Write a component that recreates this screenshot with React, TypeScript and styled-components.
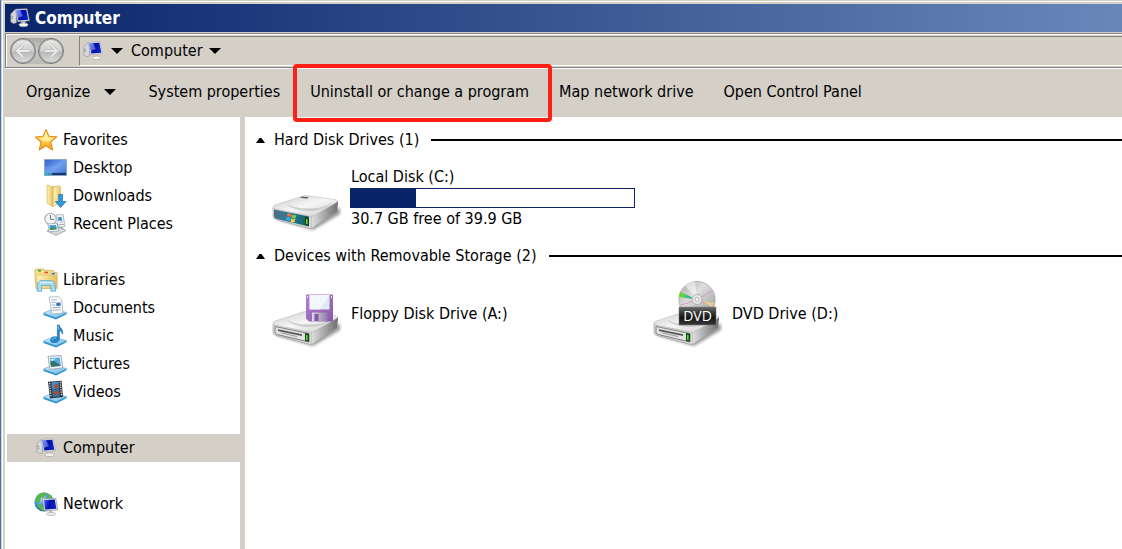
import React from "react";
import styled, { createGlobalStyle, css } from "styled-components";

const face = "#d4d0c8";
const shadow = "#808080";
const navy = "#0a246a";

const GlobalStyle = createGlobalStyle`
  * { box-sizing: border-box; }
  body {
    margin: 0;
    background: ${face};
    color: #000;
    font: 16px/22px "DejaVu Sans Condensed", "DejaVu Sans", Tahoma, sans-serif;
  }
  button { font: inherit; color: inherit; border: 0; padding: 0; background: none; cursor: default; }
  ul { list-style: none; margin: 0; padding: 0; }
  svg { display: block; flex: none; }
`;

const Frame = styled.div`
  min-height: 100vh;
  display: flex;
  border-left: 1px solid #4273b5;
  background: ${face};
`;

const Window = styled.div`
  flex: 1;
  min-width: 0;
  display: flex;
  flex-direction: column;
  margin: 1px 0 0 1px;
  padding: 2px 0 0 2px;
  border-top: 1px solid #fff;
  border-left: 1px solid #fff;
`;

const TitleBar = styled.header`
  display: flex;
  align-items: center;
  gap: 5px;
  height: 28px;
  padding-left: 5px;
  margin-bottom: 1px;
  color: #fff;
  background: linear-gradient(90deg, ${navy}, #6888ba);
`;

const Title = styled.h1`
  margin: 0;
  font-size: 17px;
  line-height: 22px;
  font-weight: bold;
`;

const NavBar = styled.nav`
  display: flex;
  align-items: stretch;
  height: 35px;
  padding: 1px 0 1px 2px;
  border: solid ${shadow};
  border-width: 1px 0 1px 1px;
  box-shadow: inset 1px 1px 0 #fff, inset 0 -1px 0 ${face}, 0 1px 0 #fff;
`;

const History = styled.div`
  display: flex;
  align-items: center;
  align-self: center;
  gap: 2px;
  margin: 0 15px 0 2px;
  border-radius: 13px;
  background: linear-gradient(#aaa9a6, #c9c7c2 40%, #bdbbb6);
`;

const RoundButton = styled.button`
  width: 26px;
  height: 26px;
  border-radius: 50%;
  border: 1px solid #77797b;
  box-shadow: inset 0 0 0 1px #a3a5a6;
  background: linear-gradient(#e9e9e7, #cfcfcd 50%, #b9bab9 55%, #dededc);
  display: grid;
  place-items: center;
`;

const Address = styled.div`
  flex: 1;
  display: flex;
  align-items: center;
  gap: 8px;
  padding-left: 3px;
  margin: 1px 0 0;
  border: solid ${shadow};
  border-width: 1px 0 0 1px;
  border-bottom: 1px solid #fff;
`;

const Crumb = styled.button`
  display: flex;
  align-items: center;
  gap: 6px;
`;

const CommandBar = styled.div`
  display: flex;
  align-items: center;
  gap: 30px;
  height: 48px;
  margin-top: 1px;
  padding: 0 0 2px 21px;
`;

const Command = styled.button<{ $marked?: boolean; $menu?: boolean }>`
  position: relative;
  display: flex;
  align-items: center;
  gap: 14px;
  white-space: nowrap;
  ${(p) => p.$menu && css`margin-right: 2px;`}
  ${(p) =>
    p.$marked &&
    css`
      &::after {
        content: "";
        position: absolute;
        inset: -17px -23px -19px -17px;
        border: 4px solid #ff2015;
        border-radius: 4px;
      }
    `}
`;

const Body = styled.div`
  flex: 1;
  display: flex;
  background: #fff;
`;

const Sidebar = styled.aside`
  flex: none;
  width: 240px;
  padding: 9px 0 9px 2px;
  border-right: 5px solid ${face};
`;

const NavGroup = styled.ul`
  margin-bottom: 28px;
`;

const NavItem = styled.li<{ $child?: boolean; $selected?: boolean }>`
  display: flex;
  align-items: center;
  gap: ${(p) => (p.$child ? 6 : 5)}px;
  height: 28px;
  padding-left: ${(p) => (p.$child ? 36 : 27)}px;
  background: ${(p) => (p.$selected ? face : "none")};
`;

const IconSlot = styled.span`
  flex: none;
  width: 24px;
  display: grid;
  place-items: center;
`;

const NavLink = styled.a`
  color: inherit;
  text-decoration: none;
`;

const Main = styled.main`
  flex: 1;
  min-width: 0;
  padding: 9px 0 0 11px;
`;

const Section = styled.section`
  margin-bottom: 8px;
`;

const SectionHead = styled.h2`
  display: flex;
  align-items: center;
  height: 28px;
  margin: 0 0 8px;
  font-size: 16px;
  line-height: 22px;
  font-weight: normal;
  &::after {
    content: "";
    flex: 1;
    height: 2px;
    margin-left: 12px;
    background: #000;
  }
`;

const Toggle = styled.button`
  display: flex;
  align-items: center;
  gap: 9px;
`;

const Tiles = styled.div`
  display: flex;
  flex-wrap: wrap;
  padding-left: 14px;
`;

const Tile = styled.article`
  display: flex;
  align-items: center;
  gap: 9px;
  width: 381px;
  height: 72px;
`;

const Meter = styled.div`
  width: 285px;
  height: 20px;
  margin-left: -1px;
  border: 1px solid ${navy};
`;

const MeterFill = styled.div`
  height: 100%;
  background: ${navy};
`;

const Down = () => (
  <svg width="12" height="6" viewBox="0 0 12 6"><path d="M0 0h12L6 6z" fill="#000" /></svg>
);

const Up = () => (
  <svg width="9" height="5" viewBox="0 0 9 5"><path d="M0 5h9L5.5 0h-2z" fill="#000" /></svg>
);

const Arrow = ({ back }: { back?: boolean }) => (
  <svg width="16" height="14" viewBox="0 0 16 14">
    <path
      d={back ? "M8 1L2 7l6 6M2 7h12" : "M8 1l6 6-6 6M14 7H2"}
      fill="none" stroke="#b4b4b2" strokeWidth="3.2" strokeLinejoin="round" />
    <path
      d={back ? "M8 1L2 7l6 6M2 7h12" : "M8 1l6 6-6 6M14 7H2"}
      fill="none" stroke="#e9e9e7" strokeWidth="2" />
  </svg>
);

const Defs = () => (
  <svg width="0" height="0" style={{ position: "absolute" }} aria-hidden="true">
    <defs>
      <linearGradient id="screen" x1="0" y1="0" x2="1" y2="0.3">
        <stop offset="0" stopColor="#5c7cf0" /><stop offset=".3" stopColor="#1a35d6" />
        <stop offset=".55" stopColor="#0010a8" /><stop offset="1" stopColor="#0a20c4" />
      </linearGradient>
      <linearGradient id="star" x1="0" y1="0" x2="0" y2="1">
        <stop offset="0" stopColor="#fff3a0" /><stop offset=".6" stopColor="#ffc83c" /><stop offset="1" stopColor="#f79a1c" />
      </linearGradient>
      <linearGradient id="desk" x1="0" y1="0" x2="1" y2="1">
        <stop offset="0" stopColor="#2d5fc4" /><stop offset=".5" stopColor="#6c9df0" /><stop offset="1" stopColor="#2a5cc0" />
      </linearGradient>
      <linearGradient id="folder" x1="0" y1="0" x2="1" y2="0">
        <stop offset="0" stopColor="#fff2b8" /><stop offset="1" stopColor="#e5c25e" />
      </linearGradient>
      <linearGradient id="tray" x1="0" y1="0" x2="1" y2="1">
        <stop offset="0" stopColor="#d8effc" /><stop offset="1" stopColor="#6bbbe9" />
      </linearGradient>
      <linearGradient id="top" x1="0" y1="0" x2="1" y2="1">
        <stop offset="0" stopColor="#c9c9c9" /><stop offset=".5" stopColor="#f6f6f6" /><stop offset="1" stopColor="#cacaca" />
      </linearGradient>
      <linearGradient id="side" x1="0" y1="0" x2="1" y2="0">
        <stop offset="0" stopColor="#dcdcdc" /><stop offset="1" stopColor="#6c6e6f" />
      </linearGradient>
      <linearGradient id="teal" x1="0" y1="0" x2="1" y2="0">
        <stop offset="0" stopColor="#526e80" /><stop offset=".5" stopColor="#1f7f9c" /><stop offset="1" stopColor="#155d55" />
      </linearGradient>
      <linearGradient id="disc" x1="0" y1="0" x2="1" y2="1">
        <stop offset="0" stopColor="#a5a5a5" /><stop offset=".4" stopColor="#dedede" /><stop offset=".6" stopColor="#c4c4c4" /><stop offset="1" stopColor="#999" />
      </linearGradient>
      <linearGradient id="label" x1="0" y1="0" x2="0" y2="1">
        <stop offset="0" stopColor="#6b6b6b" /><stop offset=".3" stopColor="#3a3a3a" /><stop offset=".6" stopColor="#151515" /><stop offset="1" stopColor="#3a3a3a" />
      </linearGradient>
      <linearGradient id="purple" x1="0" y1="0" x2="1" y2="1">
        <stop offset="0" stopColor="#b077cc" /><stop offset="1" stopColor="#8452a8" />
      </linearGradient>
      <linearGradient id="shutter" x1="0" y1="0" x2="1" y2="0">
        <stop offset="0" stopColor="#dcd7e6" /><stop offset="1" stopColor="#8f7da6" />
      </linearGradient>
      <radialGradient id="globe" cx=".35" cy=".3" r=".8">
        <stop offset="0" stopColor="#b9e8ff" /><stop offset=".5" stopColor="#3590d4" /><stop offset="1" stopColor="#0d4b94" />
      </radialGradient>
      <filter id="soft" x="-20%" y="-50%" width="140%" height="200%"><feGaussianBlur stdDeviation="1.6" /></filter>
    </defs>
  </svg>
);

const ComputerIcon = () => (
  <svg width="20" height="20" viewBox="0 0 20 20">
    <path d="M.8 6l3.600-4 2 .8v12l-3 .8L.8 14z" fill="#d6d8da" stroke="#8d9194" strokeWidth=".6" />
    <path d="M1.300 8l1.800.6M1.300 10l1.800.5" stroke="#6c7175" strokeWidth=".7" />
    <path d="M5.200 1.300L17 .8l2.400 11.900-11.600 1z" fill="#e6e5e0" stroke="#a2a5a8" strokeWidth=".6" />
    <path d="M5.900 2.200l10.400-.4L18.300 11.700l-9.900.8z" fill="url(#screen)" />
    <path d="M5.900 2.200l4-.2 3 6-5.200 2z" fill="#b9c8ff" opacity=".45" />
    <path d="M11 13.600l4.300-.3.400 2.400-4 .4z" fill="#c8c9c8" />
    <ellipse cx="13.500" cy="16.800" rx="4.600" ry="1.900" fill="#f3f3ef" stroke="#a5a5a3" strokeWidth=".7" />
  </svg>
);

const StarIcon = () => (
  <svg width="24" height="24" viewBox="0 0 24 24">
    <path d="M12 1.5l2.9 6.8 7.8.6-5.9 5.1 1.800 8-6.700-4.200L5.300 22 7 14 1.400 9l7.700-.7z" fill="url(#star)" stroke="#e88b1c" strokeWidth="1.1" strokeLinejoin="round" />
    <path d="M12 4l2 5.300 5.800.5-4.500 3.700-6 .2L5 10l5-.6z" fill="#fff7bd" opacity=".65" />
  </svg>
);

const DesktopIcon = () => (
  <svg width="24" height="24" viewBox="0 0 24 24">
    <path d="M1.500 3.500h22v16h-22z" fill="url(#desk)" stroke="#8ba6cd" />
    <path d="M2 11C8 11 17 8 23 4v12H2z" fill="#79a8f4" opacity=".35" />
    <path d="M2 17h21v2H2z" fill="#19396b" />
    <circle cx="4" cy="17.600" r="2" fill="#35b7c8" /><path d="M6 18h3" stroke="#9dd3ee" />
  </svg>
);

const DownloadsIcon = () => (
  <svg width="24" height="24" viewBox="0 0 24 24">
    <path d="M8 3l9-1v18l-9 2z" fill="#f7dc86" stroke="#d2b76c" strokeWidth=".7" />
    <path d="M4 1l6 2v20l-6-4z" fill="url(#folder)" stroke="#d2b76c" strokeWidth=".7" />
    <path d="M11 4l7-1v17l-7 2z" fill="url(#folder)" />
    <path d="M15.700 10.500h3.800v7H23l-5.400 6-5.400-6h3.500z" fill="#2f9ae0" stroke="#176fae" strokeWidth=".7" />
  </svg>
);

const RecentIcon = () => (
  <svg width="24" height="24" viewBox="0 0 24 24">
    <path d="M13 3l7-.5 2 12-7 1z" fill="#f2f6f9" stroke="#9baab5" strokeWidth=".8" />
    <path d="M15 5.500l3.500-.2.400 3-3.400.3zM17 10l3-.3" fill="#2e8bd0" stroke="#5a9dcc" strokeWidth=".6" />
    <circle cx="7.500" cy="7" r="5.700" fill="#f4f5f5" stroke="#b4b8ba" strokeWidth="1.300" />
    <path d="M7.500 3v4.400H11" stroke="#6c757b" fill="none" />
    <path d="M4 19l14-4 5 3.500-10 4.800z" fill="#d5d9db" stroke="#8f9598" strokeWidth=".7" />
    <path d="M5 12l9-.5 1.500 7.500-9.400.8z" fill="#fff" stroke="#9aa5ac" strokeWidth=".8" />
    <path d="M6.300 13.300l6.800-.4.800 4.400-7 .7z" fill="#3d9bd6" /><path d="M6.700 16.700l3-1.800 4.200 2.400-7 .7z" fill="#478a41" />
    <path d="M14 13l7-.6M15 15l5 2" stroke="#8b9498" strokeWidth=".8" />
  </svg>
);

const LibrariesIcon = () => (
  <svg width="24" height="24" viewBox="0 0 24 24">
    <path d="M.8 3l1.200-2h8l1 1.400h8l1 2.100h3v16H2z" fill="#f7dc86" stroke="#d3b05c" strokeWidth=".8" />
    <path d="M3 7h20v13H3z" fill="url(#folder)" stroke="#dcbc70" strokeWidth=".6" />
    <path d="M4 2.700h3" stroke="#20a557" strokeWidth="1.600" /><path d="M10.500 4.500h3.500" stroke="#e2503c" strokeWidth="1.600" /><path d="M17.500 5.700h3.500" stroke="#2e82d5" strokeWidth="1.600" />
    <path d="M3 23.200l.8-8.500 2-2h13l2 2 .8 8.500h-4.800v-5.700H7.600v5.700z" fill="#a6daf1" stroke="#52a6cf" strokeWidth=".8" opacity=".95" />
    <path d="M5.800 14.400h13" stroke="#e6f7ff" />
  </svg>
);

const LibraryTray = ({ children }: { children: React.ReactNode }) => (
  <svg width="24" height="24" viewBox="0 0 24 24">
    <path d="M.5 17l9-3.800 14 3.300v1.800L13 23.400.5 19z" fill="#2d91cf" />
    <path d="M.5 17l9-4 14 3.500L13 21.600z" fill="url(#tray)" stroke="#73b9e0" strokeWidth=".6" />
    {children}
  </svg>
);

const DocumentsIcon = () => (
  <LibraryTray>
    <path d="M6 1l9.500-.3 3.200 3L20 17l-11 1z" fill="#fbfcfd" stroke="#9fb0bc" strokeWidth=".8" />
    <path d="M8.300 4l5.500-.2M8.600 6.500h4M8.800 9h3.500M9.200 11.800l8.500-.5M9.500 14.300l8.400-.5" stroke="#a3aec4" strokeWidth="1" />
    <path d="M13.200 6.800l4.200-.2.300 3.200-4.200.2z" fill="#2873b8" />
  </LibraryTray>
);

const MusicIcon = () => (
  <LibraryTray>
    <path d="M14.400 1h1.800c.3 3 4 3.600 3.400 9.100-.5-2-1.600-3.200-3.300-3.400v8.500c0 4-8.800 4.600-8.800 1.200 0-3 4-4.200 6.900-3.200z" fill="#2587d2" stroke="#1668a9" strokeWidth=".7" />
    <path d="M15.200 2v4M9 15.800c.5-1.400 2.300-2 4-1.600" stroke="#89cef8" fill="none" />
  </LibraryTray>
);

const PicturesIcon = () => (
  <LibraryTray>
    <path d="M5 4.300l13-.8L19.700 16 7 17.400z" fill="#f6f7f8" stroke="#98a1a8" strokeWidth=".9" />
    <path d="M6.700 6l10-.6 1.200 8.500-9.900 1z" fill="#4eaee0" /><path d="M7.300 10l3-1.500 7.500 5.300-9.800 1z" fill="#356e63" />
    <path d="M7 7l6-.5-4 2.700z" fill="#d7f3ff" />
  </LibraryTray>
);

const VideosIcon = () => (
  <LibraryTray>
    <path d="M5 1.800l13.600-1L20 17 7 18.500z" fill="#33383e" />
    <path d="M8.500 2.300l7-.5.500 6.700-7 .5z" fill="#478fd0" /><path d="M9 9.600l7-.5.800 7.200-7.100.7z" fill="#3276a8" />
    <path d="M11 5l4-1.600.7 4-4.200.8zM10.500 12l5.300-1.600.5 3.500-5 1z" fill="#a14f35" />
    <path d="M6.600 3l1.400 14M17.200 2l1.300 14" stroke="#e4e8eb" strokeWidth="1.200" strokeDasharray="1.200 1.200" />
  </LibraryTray>
);

const NetworkIcon = () => (
  <svg width="24" height="24" viewBox="0 0 24 24">
    <circle cx="10" cy="10" r="9.600" fill="url(#globe)" />
    <path d="M4 3c3-3 8-3 9-1l-3 3-3 1-1 4-4 1C1 8 2 5 4 3zM3 13l4-1 3 3v4c-3-.5-6-3-7-6zM14 1.500l4 3-1 3-4-2z" fill="#5bb548" />
    <path d="M8.500 6.800l13.300-.6 2 11.800-13.500.8z" fill="#e8e7df" stroke="#8d9296" strokeWidth=".7" />
    <path d="M9.900 8l10.900-.5 1.500 9.300-11.200.7z" fill="url(#screen)" />
    <path d="M15 19l3-.3.600 2.200-3.500.2z" fill="#b8b9b8" />
    <ellipse cx="17" cy="22" rx="4.700" ry="1.700" fill="#ededeb" stroke="#a8a8a6" strokeWidth=".6" />
  </svg>
);

const DriveBody = ({ slot }: { slot?: boolean }) => (
  <>
    <path d="M5 57l38 11 27-16v-6z" fill="#000" opacity=".4" filter="url(#soft)" />
    <path d="M3 46l39 8v12q-1 .7-3 .2L6 57.500q-3-1-3-3z" fill="#d9d9d9" stroke="#9a9a9a" strokeWidth=".6" />
    <path d="M42 54l25-15q1.500 0 1 2l-1 8.500L42 66z" fill="url(#side)" />
    <path d="M3 45q0-1 2-2l28-9q2-.7 5-.2l28 4q3.500 1 0 3L44 53.500q-2 1-4 .7L5 47q-2-.5-2-2z" fill="url(#top)" stroke="#b5b5b5" strokeWidth=".5" />
    <path d="M16 41.500q8 8 24 7.500 18-1 22-9-6 6-22 6.500-15 .5-24-5z" fill="#c4c4c4" opacity=".8" />
    {slot ? (
      <>
        <path d="M5 48.500l34 7v8.500L7 56.500q-2-.5-2-2z" fill="#e2e2e2" stroke="#777" strokeWidth=".9" />
        <path d="M8 51.300l24 5v1.700L8 53z" fill="#555" />
        <path d="M10 55l17 4v-1l-15-3.500z" fill="#999" />
      </>
    ) : (
      <>
        <path d="M4 47.500l35 7v10L7 57q-3-.7-3-3z" fill="url(#teal)" />
        <path d="M17.500 51.500q2-1 4 .7l-.8 3q-2-1.500-4-.5z" fill="#f26b31" /><path d="M22.300 52.500q2 1.300 4 .5l-.8 3.200q-2 .8-4-.5z" fill="#8fc64b" />
        <path d="M16.500 55.500q2-1 4 .5l-.8 3q-2-1.500-4-.5z" fill="#3fa8e5" /><path d="M21.300 56.500q2 1.300 4 .6l-.8 3q-2 .8-4-.6z" fill="#ffd03e" />
        <path d="M32 34.500l7 .8-2 1.500-7-1z" fill="#666" />
      </>
    )}
    <path d="M35 55l4 .8v8l-4-.8z" fill="#174419" /><path d="M36 57l1.600.3v5l-1.600-.4z" fill="#67d542" />
  </>
);

const HardDriveIcon = () => (
  <svg width="72" height="72" viewBox="0 0 72 72"><DriveBody /></svg>
);

const FloppyIcon = () => (
  <svg width="72" height="72" viewBox="0 0 72 72">
    <DriveBody slot />
    <path d="M36 16.500h27v27H39l-3-3z" fill="url(#purple)" opacity=".95" />
    <path d="M39.500 17h20v14.500h-20z" fill="#dceaf3" /><path d="M39.500 17h20L50 31.500H39.500z" fill="#fff" opacity=".6" />
    <path d="M42 34.500h15.500v9H42z" fill="url(#shutter)" /><path d="M44.500 36h4v7h-4z" fill="#8256a0" />
    <path d="M37.500 18v2M61.500 18v2" stroke="#ead8f4" />
  </svg>
);

const DvdText = styled.text`
  font: 14px "Open Sans", sans-serif;
  fill: #fff;
`;

const DvdIcon = () => (
  <svg width="72" height="72" viewBox="0 0 72 72">
    <DriveBody slot />
    <circle cx="46" cy="21.500" r="18.200" fill="url(#disc)" stroke="#a8a8a8" strokeWidth=".7" />
    <path d="M46 21.500L34 7.500q5-4 10-4z" fill="#fff" opacity=".5" />
    <path d="M46 21.500L29 14l-1 5z" fill="#5fd62d" /><path d="M40 19l-5-2.400-1 2.700 6 1.500z" fill="#38aec0" />
    <path d="M46 21.500l15.500-9M46 21.500l17 7M46 21.500l-17 6" stroke="#d39ac8" strokeWidth="1" />
    <path d="M52 23l11 2-2 5z" fill="#f3d783" opacity=".8" />
    <circle cx="46" cy="21.500" r="5" fill="#e8e8e8" stroke="#b0b0b0" /><circle cx="46" cy="21.500" r="2" fill="#fff" stroke="#999" strokeWidth=".7" />
    <path d="M28 29h37v18H28z" fill="url(#label)" stroke="#777" strokeWidth=".5" />
    <DvdText x="46.500" y="43" textAnchor="middle">DVD</DvdText>
  </svg>
);

const Item = ({ icon, label, child, selected }: { icon: React.ReactNode; label: string; child?: boolean; selected?: boolean }) => (
  <NavItem $child={child} $selected={selected}>
    <IconSlot>{icon}</IconSlot>
    <NavLink href="#" aria-current={selected ? "page" : undefined}>{label}</NavLink>
  </NavItem>
);

const Group = ({ title, children }: { title: string; children: React.ReactNode }) => (
  <Section>
    <SectionHead><Toggle aria-expanded="true"><Up />{title}</Toggle></SectionHead>
    <Tiles>{children}</Tiles>
  </Section>
);

export default function App() {
  return (
    <Frame>
      <GlobalStyle />
      <Defs />
      <Window>
        <TitleBar><ComputerIcon /><Title>Computer</Title></TitleBar>
        <NavBar aria-label="Address">
          <History>
            <RoundButton aria-label="Back"><Arrow back /></RoundButton>
            <RoundButton aria-label="Forward"><Arrow /></RoundButton>
          </History>
          <Address>
            <Crumb aria-label="Locations"><ComputerIcon /></Crumb>
            <Crumb aria-label="Recent"><Down /></Crumb>
            <Crumb>Computer<Down /></Crumb>
          </Address>
        </NavBar>
        <CommandBar role="toolbar">
          <Command $menu>Organize<Down /></Command>
          <Command>System properties</Command>
          <Command $marked>Uninstall or change a program</Command>
          <Command>Map network drive</Command>
          <Command>Open Control Panel</Command>
        </CommandBar>
        <Body>
          <Sidebar>
            <NavGroup>
              <Item icon={<StarIcon />} label="Favorites" />
              <Item child icon={<DesktopIcon />} label="Desktop" />
              <Item child icon={<DownloadsIcon />} label="Downloads" />
              <Item child icon={<RecentIcon />} label="Recent Places" />
            </NavGroup>
            <NavGroup>
              <Item icon={<LibrariesIcon />} label="Libraries" />
              <Item child icon={<DocumentsIcon />} label="Documents" />
              <Item child icon={<MusicIcon />} label="Music" />
              <Item child icon={<PicturesIcon />} label="Pictures" />
              <Item child icon={<VideosIcon />} label="Videos" />
            </NavGroup>
            <NavGroup>
              <Item selected icon={<ComputerIcon />} label="Computer" />
            </NavGroup>
            <ul>
              <Item icon={<NetworkIcon />} label="Network" />
            </ul>
          </Sidebar>
          <Main>
            <Group title="Hard Disk Drives (1)">
              <Tile>
                <HardDriveIcon />
                <div>
                  <div>Local Disk (C:)</div>
                  <Meter role="meter" aria-label="Space used" aria-valuemin={0} aria-valuemax={100} aria-valuenow={23}>
                    <MeterFill style={{ width: "23%" }} />
                  </Meter>
                  <div>30.7 GB free of 39.9 GB</div>
                </div>
              </Tile>
            </Group>
            <Group title="Devices with Removable Storage (2)">
              <Tile><FloppyIcon />Floppy Disk Drive (A:)</Tile>
              <Tile><DvdIcon />DVD Drive (D:)</Tile>
            </Group>
          </Main>
        </Body>
      </Window>
    </Frame>
  );
}
